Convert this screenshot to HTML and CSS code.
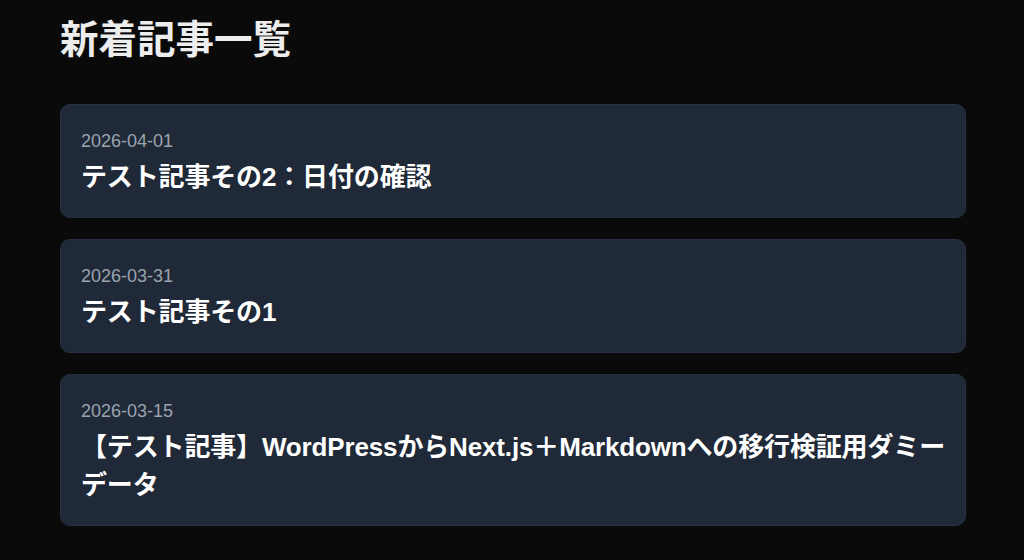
FILE: index.html
```html
<!DOCTYPE html>
<html lang="ja">
<head>
<meta charset="utf-8">
<title>新着記事一覧</title>
<link rel="stylesheet" href="styles.css">
</head>
<body>
<main class="page">
  <h1 class="heading">新着記事一覧</h1>
  <ul class="posts">
    <li class="card">
      <div class="date">2026-04-01</div>
      <h2 class="title">テスト記事その2：日付の確認</h2>
    </li>
    <li class="card">
      <div class="date">2026-03-31</div>
      <h2 class="title">テスト記事その1</h2>
    </li>
    <li class="card">
      <div class="date">2026-03-15</div>
      <h2 class="title">【テスト記事】WordPressからNext.js＋Markdownへの移行検証用ダミーデータ</h2>
    </li>
  </ul>
</main>
</body>
</html>
```

FILE: styles.css
```css
html, body {
  margin: 0;
  padding: 0;
  background: #0a0a0a;
}
body {
  font-family: "Liberation Sans", Arial, "Noto Sans CJK JP", sans-serif;
  color: #ededed;
}
.page {
  padding: 17px 58px 0 60px;
}
.heading {
  margin: 0 0 42px;
  font-size: 38.5px;
  line-height: 45px;
  font-weight: 700;
  color: #ededed;
}
.posts {
  list-style: none;
  margin: 0;
  padding: 0;
  display: flex;
  flex-direction: column;
  gap: 21px;
}
.card {
  background: #1f2937;
  border: 1px solid #273142;
  border-radius: 10px;
  padding: 23px 8px 21px 20px;
}
.date {
  font-size: 18px;
  line-height: 26px;
  color: #9ca3af;
}
.title {
  margin: 4px 0 0;
  font-size: 26px;
  line-height: 38px;
  font-weight: 700;
  letter-spacing: -0.15px;
  color: #ffffff;
}
```
